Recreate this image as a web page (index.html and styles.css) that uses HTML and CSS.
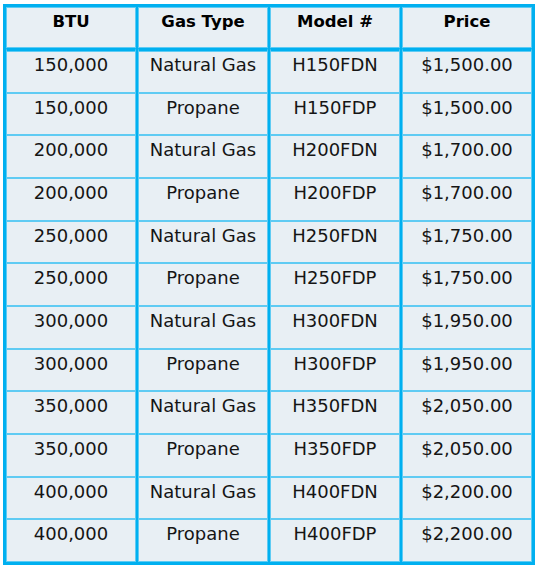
FILE: index.html
```html
<!DOCTYPE html>
<html>
<head>
<meta charset="utf-8">
<link rel="stylesheet" href="styles.css">
</head>
<body>
<table class="price-table">
  <thead>
    <tr><th>BTU</th><th>Gas Type</th><th>Model #</th><th>Price</th></tr>
  </thead>
  <tbody>
    <tr><td>150,000</td><td>Natural Gas</td><td>H150FDN</td><td>$1,500.00</td></tr>
    <tr><td>150,000</td><td>Propane</td><td>H150FDP</td><td>$1,500.00</td></tr>
    <tr><td>200,000</td><td>Natural Gas</td><td>H200FDN</td><td>$1,700.00</td></tr>
    <tr><td>200,000</td><td>Propane</td><td>H200FDP</td><td>$1,700.00</td></tr>
    <tr><td>250,000</td><td>Natural Gas</td><td>H250FDN</td><td>$1,750.00</td></tr>
    <tr><td>250,000</td><td>Propane</td><td>H250FDP</td><td>$1,750.00</td></tr>
    <tr><td>300,000</td><td>Natural Gas</td><td>H300FDN</td><td>$1,950.00</td></tr>
    <tr><td>300,000</td><td>Propane</td><td>H300FDP</td><td>$1,950.00</td></tr>
    <tr><td>350,000</td><td>Natural Gas</td><td>H350FDN</td><td>$2,050.00</td></tr>
    <tr><td>350,000</td><td>Propane</td><td>H350FDP</td><td>$2,050.00</td></tr>
    <tr><td>400,000</td><td>Natural Gas</td><td>H400FDN</td><td>$2,200.00</td></tr>
    <tr><td>400,000</td><td>Propane</td><td>H400FDP</td><td>$2,200.00</td></tr>
  </tbody>
</table>
</body>
</html>
```
FILE: styles.css
```css
html, body {
  background: #ffffff;
}
body {
  margin: 4px 0 0 3px;
  font-family: "DejaVu Sans", Verdana, sans-serif;
  color: #151515;
}
.price-table {
  border-collapse: separate;
  border-spacing: 2px 0;
  border-style: solid;
  border-color: #00b0f0;
  border-width: 3px 1px;
  background: #00b0f0;
}
.price-table th,
.price-table td {
  width: 130px;
  box-sizing: border-box;
  padding: 0;
  border: 1px solid #5fcbf3;
  background: #e8eff4;
  text-align: center;
  vertical-align: top;
}
.price-table th {
  height: 41px;
  padding-top: 4px;
  font-size: 16.5px;
  font-weight: bold;
  color: #000000;
}
.price-table td {
  height: 42.67px;
  padding-top: 3px;
  font-size: 18px;
}
.price-table tbody tr:first-child td {
  height: 44.67px;
  border-top: 3px solid #00b0f0;
  box-shadow: inset 0 1px 0 #5fcbf3;
}
```
